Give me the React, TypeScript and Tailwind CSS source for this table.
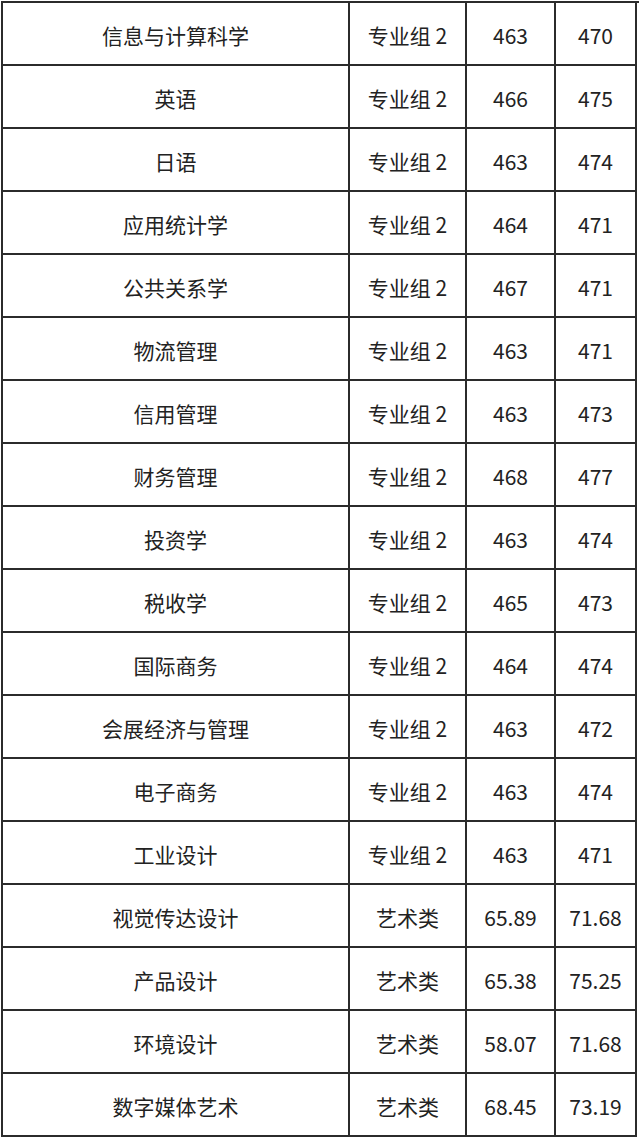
const rows: [string, string, string, string][] = [
    ['信息与计算科学', '专业组 2', '463', '470'],
    ['英语', '专业组 2', '466', '475'],
    ['日语', '专业组 2', '463', '474'],
    ['应用统计学', '专业组 2', '464', '471'],
    ['公共关系学', '专业组 2', '467', '471'],
    ['物流管理', '专业组 2', '463', '471'],
    ['信用管理', '专业组 2', '463', '473'],
    ['财务管理', '专业组 2', '468', '477'],
    ['投资学', '专业组 2', '463', '474'],
    ['税收学', '专业组 2', '465', '473'],
    ['国际商务', '专业组 2', '464', '474'],
    ['会展经济与管理', '专业组 2', '463', '472'],
    ['电子商务', '专业组 2', '463', '474'],
    ['工业设计', '专业组 2', '463', '471'],
    ['视觉传达设计', '艺术类', '65.89', '71.68'],
    ['产品设计', '艺术类', '65.38', '75.25'],
    ['环境设计', '艺术类', '58.07', '71.68'],
    ['数字媒体艺术', '艺术类', '68.45', '73.19'],
];

const cell = 'flex items-center justify-center h-[63px] border-r-2 border-b-2 border-[#2b2b2b] pt-[4px]';

export default function App() {
    return (
        <div className="min-h-[1138px] bg-white pl-[1px] pt-[1px]">
            <div
                className="grid w-[638px] grid-cols-[347px_117px_89px_81px] border-l-2 border-t-2 border-[#2b2b2b] text-[21px] text-[#222]"
                style={{ fontFamily: '"Noto Sans CJK SC", "Noto Sans", sans-serif' }}
            >
                {rows.map((r) => (
                    <div key={r[0]} className="contents">
                        <div className={cell}>{r[0]}</div>
                        <div className={cell}>{r[1]}</div>
                        <div className={cell}>{r[2]}</div>
                        <div className={cell}>{r[3]}</div>
                    </div>
                ))}
            </div>
        </div>
    );
}
